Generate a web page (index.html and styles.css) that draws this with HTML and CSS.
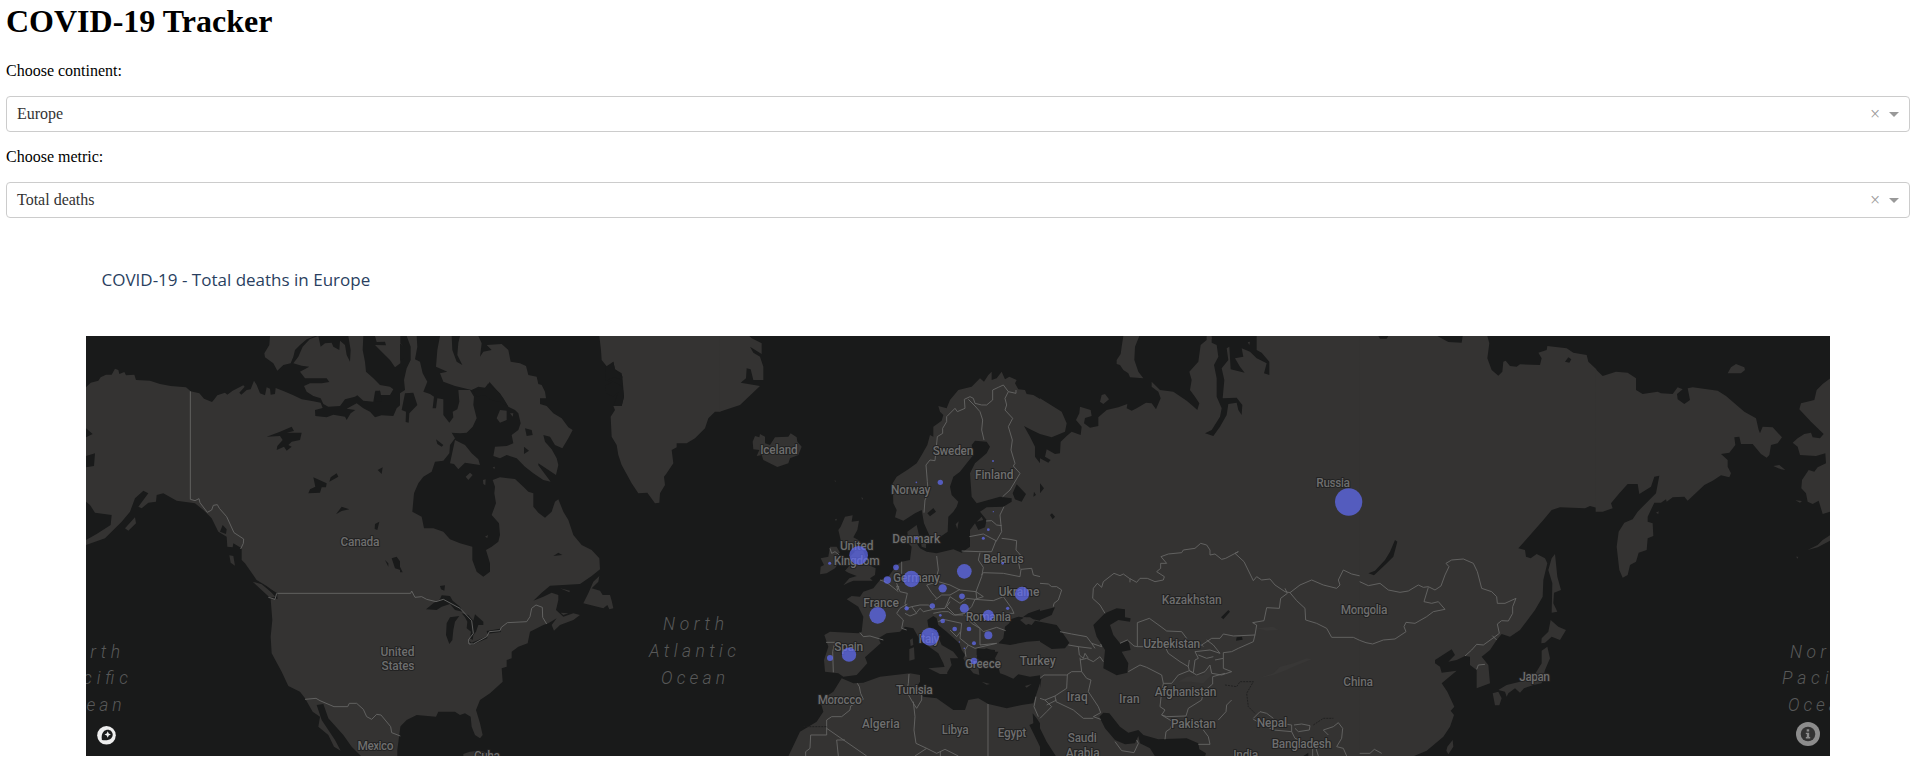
FILE: index.html
```html
<!DOCTYPE html>
<html lang="en">
<head>
<meta charset="utf-8">
<title>COVID-19 Tracker</title>
<link rel="stylesheet" href="styles.css">
</head>
<body>
<h1 class="page-title">COVID-19 Tracker</h1>
<p class="label">Choose continent:</p>
<div class="select"><span class="select-value">Europe</span><span class="select-clear">×</span><span class="select-arrow"></span></div>
<p class="label">Choose metric:</p>
<div class="select"><span class="select-value">Total deaths</span><span class="select-clear">×</span><span class="select-arrow"></span></div>
<section class="graph">
<h2 class="graph-title">COVID-19 - Total deaths in Europe</h2>
<svg class="map" viewBox="86 336 1744 420" width="1744" height="420">
<!-- North America, west -->
<g transform="translate(80 330) scale(.33333)">
<path class="land" d="M18 172L32 158 55 152 62 142 78 134 95 134 105 116 115 120 118 132 133 126 138 136 163 134 168 150 210 152 240 162 272 168 318 172 332 184 358 190 372 206 396 216 403 208 412 196 435 188 442 194 458 182 490 166 494 170 478 188 484 194 500 180 512 178 522 152 530 165 540 190 555 196 560 172 570 176 572 194 585 192 587 174 612 184 640 196 665 208 700 214 722 218 728 234 705 240 706 258 740 262 760 254 795 260 800 270 812 250 826 240 800 236 830 220 850 235 870 245 885 262 905 256 940 258 950 235 961 225V1190L952 1260V1278H843L815 1250 790 1215 745 1165 730 1122 710 1125 725 1170 765 1230 782 1262 762 1250 745 1215 715 1190 720 1160 698 1145 675 1105 660 1085 625 1068 605 1025 575 970 572 920 577 870 572 808 592 806 588 790 560 768 530 750 495 700 485 690 485 655 460 640 458 652 442 650 440 620 415 605 395 565 370 540 345 520 290 512 250 490 230 495 228 515 205 518 185 535 175 530 205 490 190 482 165 505 150 545 125 575 75 625 18 645 18 630 50 612 92 585 95 555 45 548 30 525 18 515V412L42 408 45 370 18 378V322L38 312 18 295Z"/>
<path class="land" d="M570 18H705L680 28 660 45 645 60 640 80 632 100 610 105 592 122 580 100 555 82 553 70 568 45ZM715 18L690 27 668 50 655 80 640 100 665 107 688 110 660 125 675 145 740 145 748 156 725 160 690 160 672 168 680 185 700 198 722 205 730 222 745 230 780 228 795 208 825 200 832 196 850 212 880 215 885 185 900 182 902 195 930 195 940 178 930 170 900 165 880 145 858 125 855 95 848 60 850 18H805L812 60 810 95 800 75 795 45 780 32 778 60 760 50 755 38 735 40 722 50ZM885 18H961V100L945 112 930 90 905 65 885 45 918 46 915 35 890 36ZM518 755L545 763 590 800 570 803ZM135 595L165 562 168 580 145 602ZM448 676L460 678 465 707 452 698Z"/>
<path class="water" d="M560 320L600 305 635 290 642 303 620 308 665 308 660 330 635 335 625 345 635 350 620 362 612 350 590 360 592 348 608 330 600 318ZM685 490L690 478 706 470 700 442 740 460 738 472 725 472 720 488ZM748 455L752 442 770 430 775 440ZM768 553L785 530 808 538 785 543ZM893 420L908 412 905 432ZM935 685L950 680 961 695V720L945 715ZM885 582L898 575 892 600 884 597ZM915 690L925 700 925 710ZM560 770L592 790 592 808ZM428 585L440 598 438 612 420 605ZM886 182L900 182 905 215 885 215Z"/>
<path class="border" d="M331 184V508L345 512 357 506 360 518 382 547 395 540 400 526 412 524 418 535 440 560 462 608 491 627 490 640 482 657M592 790H961M565 802L585 808 590 790M675 1108L708 1105 720 1112 762 1130H803L808 1120H830L850 1138 860 1160 875 1168 890 1153 903 1155 932 1190 935 1208 961 1218"/>
</g>
<!-- North America, east, and Greenland -->
<g transform="translate(400 330) scale(.33333)">
<path class="land" d="M0 90L12 80 10 50 0 38ZM120 18H155L157 60 170 95 187 105 172 75 175 38 180 18H235L245 40 240 80 250 65 275 60 260 45 305 42 325 60 332 95 360 100 378 108 385 135 410 140 415 162 425 165 435 185 438 205 420 205 420 222 440 228 460 250 485 265 505 292 518 300 505 325 487 355 465 345 450 320 430 315 435 335 455 358 470 385 475 405 468 435 415 400 415 406 452 455 430 450 400 430 375 410 350 385 320 375 300 385 280 378 285 350 320 348 340 340 335 315 355 300 362 280 355 250 345 240 325 230 310 205 290 180 268 155 265 175 235 170 215 180 165 168 130 155 120 130 142 125 108 110 112 60ZM0 190L15 180 12 150 20 115 32 90 32 50 20 18H50L52 50 45 88 60 95 68 130 82 155 70 185 90 192 102 200 98 235 108 235 112 205 130 208 130 255 148 278 160 262 158 245 172 238 178 215 175 180 210 180 222 200 220 225 230 265 218 290 200 308 180 310 155 308 165 325 150 345 148 370 130 392 105 395 95 425 70 440 55 460 42 490 37 545 65 560 72 595 100 595 130 605 150 628 180 640 217 650 217 690 230 725 250 740 270 725 270 700 258 660 275 650 295 635 300 615 297 580 275 555 288 520 283 490 285 470 278 450 300 442 345 447 370 470 385 485 400 490 400 530 415 548 435 563 455 545 465 515 475 508 490 545 505 570 520 615 545 645 575 660 598 685 600 718 575 738 540 762 450 767 425 788 400 812 430 800 455 788 475 795 475 810 468 840 490 860 520 850 540 855 520 870 480 885 462 902 455 885 470 865 445 880 430 885 390 905 383 940 355 950 335 965 335 985 320 990 320 1010 305 1015 308 1055 270 1090 240 1110 228 1140 240 1180 248 1215 240 1225 225 1215 215 1190 212 1160 195 1150 180 1155 165 1145 115 1145 108 1160 50 1155 20 1170 0 1190ZM598 738L595 755 575 775 600 782 608 795 630 795 635 812 640 835 628 838 622 825 610 835 550 820 565 790 580 755ZM165 330L150 400 162 402 175 418 195 398 240 405 235 388 215 370 195 345ZM290 265L300 240 320 242 320 270 300 278ZM330 250L340 250 338 260ZM197 440L210 428 218 435 205 450ZM249 450L257 448 256 466 250 462ZM255 620L264 615 262 624ZM480 775L510 782 508 787ZM482 848L505 850 490 855ZM278 412L285 410 283 418Z"/>
<path class="land" d="M598 18H961V245L945 245 925 265 915 295 885 325 860 340 830 340 830 352 815 360 820 400 800 430 792 440 795 465 780 490 778 518 765 520 742 488 715 490 695 460 665 405 655 375 650 345 635 320 632 260 645 240 640 228 665 228 672 200 668 150 665 130 645 118 640 95 625 115 605 90 603 60ZM190 1272Q225 1255 270 1270L300 1279H190Z"/>
<path class="water" d="M615 112L640 95 645 118 668 140 665 150 645 142 625 148 650 160 668 170 672 200 665 228 640 228 655 185 640 200 618 190 618 165 635 158 617 150ZM78 838L100 820 120 808 125 796 150 798 158 812 180 830 188 845 165 840 150 822 125 830 110 840ZM140 880L150 862 178 858 165 875 160 900 157 930 148 942 138 915ZM185 850L205 855 220 872 225 853 250 875 250 885 235 885 228 905 220 915 218 930 210 925 213 905 200 895 202 875 195 862ZM203 930L215 938 262 918 262 925 215 946ZM260 903L300 896 303 906 262 911ZM120 768L135 766 133 782 123 778ZM375 295L395 300 398 315 380 318ZM372 350L387 362 372 372ZM460 678L475 668 487 675ZM108 328L130 345 125 350 112 342ZM0 40L12 50V85L0 92ZM15 190L40 188 52 225 28 250 26 278 17 276 18 245 5 240ZM218 178L250 180 265 160 300 190 325 230 300 215 280 212 265 205 255 195 230 200ZM0 710L8 727H0Z"/>
<path class="border" d="M0 790H32L35 783 45 802 65 800 80 808 108 815 130 808 180 835 215 872 220 910 205 930 207 942 220 942 260 920 268 905 300 902 304 892 322 878 380 875 390 860 395 835 408 825 427 832 428 862 440 882"/>
</g>
<!-- Europe and North Africa -->
<g transform="translate(720 330) scale(.33333)">
<path class="land" d="M-1 18H88L95 25 125 40 125 72 90 50 100 68 120 80 130 110 130 150 100 150 92 118 80 115 78 145 62 158 120 168 60 225 -1 245ZM98 335L105 318 118 322 120 312 135 320 135 340 150 345 165 322 205 320 212 310 230 322 232 335 245 350 235 375 210 385 205 400 172 411 130 390 125 375 110 378 118 360 100 358ZM362 590L375 560 398 556 395 575 417 572 412 600 400 622 415 630 425 650 440 690 445 705 467 715 465 735 450 745 458 752 400 752 385 758 370 766 388 745 410 738 385 728 375 722 395 700 390 680 405 665 385 650 362 630 355 600ZM330 650L350 650 360 668 352 672 355 700 345 715 320 730 300 733 302 710 312 705 302 685 325 680Z"/>
<path class="land" d="M525 562L530 540 520 520 518 460 530 440 565 418 590 400 605 375 622 345 630 315 640 320 640 290 665 272 670 255 660 245 655 228 680 235 690 210 715 180 755 170 780 145 792 155 805 135 815 125 815 150 830 145 845 125 855 148 868 140 890 150 885 160 895 178 915 180 920 192 940 195 960 207V875L945 872 935 885 918 880 908 862 895 860 872 868 868 880 855 890 850 925 835 940 870 945 920 935 960 932V1036L930 1040 895 1033 880 1046 855 1035 840 1030 835 1010 825 985 835 965 825 965 800 955 775 962 770 985 790 998 775 1010 778 1035 760 1030 740 1005 730 985 735 975 725 960 718 940 680 905 655 885 650 865 640 858 622 870 625 890 650 910 665 945 700 965 715 985 690 985 695 1005 680 1030 670 1000 655 970 620 945 600 930 580 895 555 890 540 905 500 910 475 925 482 940 435 982 442 1000 410 1035 370 1040 355 1030 315 1025 312 990 325 950 313 915 330 905 415 910 425 905 430 860 415 830 380 808 395 798 420 800 430 785 460 775 480 750 505 740 530 705 545 695 570 690 575 650 565 640 562 605 590 585 598 620 590 640 600 655 620 665 650 670 700 658 725 668 750 650 750 600 765 580 775 600 795 592 800 570 780 545 800 532 850 530 875 515 875 505 840 500 770 520 755 500 750 430 765 400 800 370 810 350 800 335 765 332 755 345 760 375 740 400 720 425 700 440 690 470 695 495 715 515 710 530 700 545 685 560 683 605 655 625 630 620 612 580 605 540 585 550 550 572Z"/>
<path class="land" d="M205 1279L240 1205 290 1175 310 1145 303 1120 310 1105 340 1085 365 1045 400 1060 430 1058 480 1040 570 1030 600 1035 600 1055 590 1070 610 1100 650 1105 700 1140 735 1140 745 1110 775 1105 805 1122 860 1135 905 1125 940 1120 950 1090 960 1060V1180L950 1165 938 1150 940 1180 928 1185 955 1240 960 1250V1279ZM625 1015L680 1010 682 1032 660 1032ZM568 957L582 952 584 988 568 992ZM570 930L578 925 580 945 572 948ZM785 1055L810 1062 800 1064ZM915 1068L935 1062 920 1073ZM602 630L618 628 618 655 605 650ZM707 583L716 574 712 597ZM424 502L429 504 427 510ZM342 452H348V455ZM345 568L351 566 348 574ZM770 575L785 560 790 570Z"/>
<path class="water" d="M912 288L935 300 960 312V400L945 380 945 350 930 320ZM622 550L640 534 648 545 630 559ZM878 490L890 463 918 492 905 515 885 508ZM908 862L925 850 960 838V872L940 868 930 862ZM942 485L948 495 940 500ZM770 955L825 960 825 985 790 990 770 975Z"/>
<path class="land" d="M900 870L915 862 940 875 918 885Z"/>
<path class="border" d="M612 548L615 510 625 490 622 455 618 405 630 390 645 392 652 320 668 310 668 295 680 275 680 260 705 235 712 245 735 235 733 208 750 200 760 205 765 220 785 225 800 225 818 210 818 180 835 172 850 165 865 185 888 190 888 180M745 208L765 228 780 245 788 270 785 300 792 330M865 185L855 205 860 225 855 240 878 265 865 290 877 330 873 360 885 400 880 408 900 430 870 480 848 500M852 530L840 555 845 605 828 635M798 573L815 572 830 585 845 587M748 620L790 612 828 632 815 665 780 665 725 663M845 625L870 628 890 632 888 660 910 685 895 695 900 718M785 735L790 728 850 730 900 740 903 718 935 715 940 735 961 740M780 668L775 690 790 712 785 740 768 785M650 678L655 720 650 740 655 755M655 755L620 765 635 788 650 805M655 755L690 765 720 780 768 785 770 805M645 810L665 795 690 795 720 778M560 835L575 830 600 825 625 825 640 838 675 835 690 800M690 800L720 820 740 805 765 808 755 830 735 850 705 855 680 830 690 815M765 808L820 812 850 800 875 835 882 850 860 850M755 870L790 905 830 892 857 902M735 855L755 880 780 895 780 945 830 940M640 850L665 845 685 845 700 855 730 855M655 875L670 868 725 880 720 925 745 945 735 960 738 980M690 900L710 920 722 905M745 945L765 955 830 940M545 695L545 730 525 745 530 760 540 785 562 790 555 820 560 835M480 750L495 755 510 765 535 785M562 822L540 835 530 850 550 870 545 895 560 900M555 850L570 858 590 850 575 830M590 848L600 835 610 845 640 838M420 908L430 920 450 918 490 930M318 937L345 937 338 965 340 1027M330 655L335 670 345 665 358 675M768 785L790 800 765 808M530 768L537 770 533 780ZM412 1060L418 1070 422 1090 430 1108 392 1128 390 1140 365 1160 335 1160 320 1170V1215H272L270 1255 257 1265V1278M320 1195L440 1278M375 1230H350L355 1278M567 1032L565 1060 560 1085 580 1120 590 1135 605 1110 605 1090M580 1115L585 1160 582 1200 588 1240 620 1255 585 1278M620 1255L650 1270 675 1258 715 1278M661 1265V1278M804 1122V1278M948 1100L942 1130 955 1160"/>
<path class="border dashed" d="M250 1190H320"/>
</g>
<!-- Russia, Middle East and Central Asia -->
<g transform="translate(1040 330) scale(.33333)">
<path class="land" d="M0 18H961V1279H0Z"/>
<path class="water" d="M0 18H250L245 50 242 72 230 90 230 102 240 105 250 120 265 130 270 142 310 145 295 125 283 90 285 50 298 18H500L500 30 482 45 475 95 448 125 455 150 450 180 465 200 478 220 472 240 455 225 440 212 400 185 360 180 335 155 335 170 355 185 362 205 348 238 335 220 318 218 290 235 275 242 260 235 262 222 235 232 200 240 175 262 175 288 150 293 132 280 135 264 155 258 152 240 120 230 118 250 108 270 125 290 122 315 95 305 80 318 62 335 60 370 45 372 20 358 15 380 32 390 25 398 0 385V312L35 322 75 305 80 280 65 245 0 205ZM515 18H650V60L665 68 688 95V135L672 130 680 100 650 85 630 65 605 55 610 80 585 85 600 110 614 128 572 118 568 50 560 55 565 90 545 115 553 150 548 205 590 203 607 225 605 255 595 240 590 218 565 222 560 255 540 290 520 318 495 310 515 300 540 260 545 235 530 200 530 145 522 105 535 80 530 45 515 38ZM160 885L195 850 230 835 255 838 255 862 272 865 270 875 235 870 210 885 220 915 240 940 265 930 272 960 245 965 265 1000 262 1028 230 1036 190 1015 195 960 170 920ZM178 1160L190 1148 208 1150 240 1190 265 1208 295 1200 310 1215 355 1228 440 1225 475 1240 478 1258 498 1270 495 1279H345L330 1255 300 1240 295 1218 285 1240 255 1243 225 1230 195 1195ZM0 1195L20 1235 48 1279H0ZM0 875L50 885 70 912 88 938 75 955 35 957 0 935ZM0 843L45 832 35 855 0 870ZM543 862L565 840 570 845 550 868ZM588 932L590 922 606 920 608 929ZM0 460L12 475 0 490ZM30 555L36 550 45 560 38 568ZM790 1278L805 1268V1279ZM0 1040L4 1045 0 1075Z"/>
<path class="land" d="M180 215L185 195 195 192 207 208 190 222ZM498 22H515V28ZM623 37L630 35 628 45Z"/>
<path class="relief" d="M655 1045L700 1030 720 1010 760 1000 800 985 815 988 760 1010 740 1020 700 1035ZM650 895L700 890 715 900 680 902ZM415 1055L440 1040 490 1035 510 1010 520 1030 490 1060 450 1055Z"/>
<path class="border" d="M0 760L25 762 35 770 50 770 65 780 55 810 42 820 40 830M195 850L180 825 158 805 160 775 172 760 185 772 190 755 222 730 240 737 250 732 268 745 290 757 300 745 322 745 345 755 370 750 373 740 350 725 362 715 362 700 380 700 363 680 385 672 425 668 430 660 465 655 482 640 500 645 510 660 510 675 525 672 545 688 557 685 595 665 585 670 612 695 640 752 650 740 665 750 690 747 705 765 735 785 750 788M270 745V757M735 775L742 790 722 805 718 835 680 833 672 872 638 878 650 885 645 915 580 918 550 912 540 925 515 925 485 945 490 950M750 788L780 765 815 750 850 765 890 775 900 765 895 750 910 720 935 732 961 738M750 788L770 812 795 835 797 870 830 880 860 895 875 922 940 922 961 932M645 915L640 935 595 955 575 965 550 968 550 985 525 990M240 940L262 930 282 948 292 950V878L328 865 360 888 380 903 425 905 440 925 440 945 485 945M292 950H310M375 950L385 970 420 995 445 1010 448 1022 460 1028 465 990 475 985 465 965 510 960 540 970 520 945 500 930M475 975L500 985 520 980M448 990L445 1010M265 1025L300 1005 320 1012 365 1035 370 1060 395 1060 415 1035 448 1022 470 1035 495 1025 510 1005 515 1030 545 1035 575 1025 550 1015 550 985M370 1060L365 1085 360 1130 375 1140 365 1155 398 1175 392 1195 378 1205 375 1228M365 1155L380 1160 438 1158 445 1135 485 1110 490 1085 518 1062 518 1040 555 1030M575 1110L560 1125 558 1145 535 1170M490 1200L505 1220 510 1243 475 1243M60 905L95 912 140 920 155 940 185 950 182 942M85 945L115 950 155 955M155 940L165 955M115 950L118 975 130 985 135 970 145 985M120 983L125 1025 140 1045 153 1050 145 1085 175 1130 182 1148 160 1160 182 1168M120 990L140 985 160 995 180 980 190 995M125 1025L95 1025 80 1035 45 1035 12 1035 0 1045M82 1035L80 1075 45 1098 48 1115 100 1140 130 1165 160 1165M45 1098L15 1110 0 1105M15 1110L35 1130 20 1145 0 1165M50 1110L20 1125M225 1235L245 1262 282 1268 295 1240 290 1230M640 1165L660 1145 680 1150 700 1165M735 1182L755 1185 755 1205 700 1200 640 1168M762 1185L785 1182 810 1187 808 1200 775 1205 765 1195M755 1205L765 1225 790 1235M865 1215L850 1200 880 1190 895 1178 908 1195 905 1225 890 1250 910 1255 920 1278M818 1255V1278M828 1255L835 1278"/>
<path class="border dashed" d="M555 1065L590 1070 600 1055 640 1055 620 1090 625 1130 645 1150M820 1185L850 1165 880 1165"/>
</g>
<!-- East Asia -->
<g transform="translate(1360 330) scale(.33333)">
<path class="land" d="M-1 18H382L388 40 382 85 395 120 415 137 427 125 430 95 437 92 450 108 470 110 480 103 540 105 545 85 535 68 560 60 562 48 620 55 640 68 680 75 685 95 709 118V545L715 535 690 528 675 535 600 532 575 540 550 570 515 610 475 655 495 660 498 680 512 685 530 672 555 685 562 700 550 750 548 800 525 840 480 900 450 920 425 912 410 930 390 960 365 980 385 1005 390 1060 350 1075 350 1020 330 1005 330 980 315 978 290 990 265 995 285 975 275 958 225 990 225 1000 240 1010 245 1028 290 1022 245 1060 262 1085 283 1130 272 1142 282 1155 270 1190 250 1220 200 1262 160 1279H-1ZM575 685L585 672 592 740 603 780 582 788 580 820 592 845 575 848 577 760 565 720ZM572 870L595 890 618 900 600 930 575 920 555 938 544 940 545 925 565 905ZM545 962L562 950 570 985 555 1020 545 1060 520 1065 492 1075 480 1088 465 1075 445 1090 440 1100 435 1085 415 1080 440 1065 480 1055 520 1040 545 1000ZM398 1090L415 1085 425 1105 418 1126 405 1126ZM262 1250L278 1230 280 1250 265 1273 259 1262Z"/>
<path class="water" d="M25 730L45 722 75 690 90 665 105 630 112 635 100 680 75 705 42 736ZM232 18H308L305 38 265 36ZM55 18H85L80 26 60 26ZM615 95L625 82 634 88 628 98Z"/>
<path class="border" d="M-1 755L25 767 60 760 85 780 120 787 145 783 175 765 190 772 205 770 225 780 243 768 255 735 267 710 258 700 275 690 310 687 340 700 352 725 365 775 395 785 410 800 412 820 435 820 468 805 458 830 458 850 445 873 425 872 412 882 418 910 405 920 370 945 350 943 335 960 315 978M205 772L192 815 215 820 235 815 255 838 220 845 200 860 165 880 138 877 132 890 138 905 105 927 70 930 38 942 18 938 -1 931M350 1018L355 1005 375 1003M397 917L410 930M-1 1270L30 1270 43 1258 65 1270"/>
</g>
<!-- Bering Strait -->
<g transform="translate(1596 330) scale(.33333)">
<path class="land" d="M-1 118L20 138 60 125 95 128 120 145 120 180 140 192 185 185 195 190 230 192 245 172 260 178 243 192 245 208 265 222 282 210 275 175 290 172 365 182 390 198 445 245 480 265 488 300 492 310 500 290 530 292 558 322 545 340 525 345 520 375 512 383 495 372 470 342 435 342 430 320 415 322 418 345 400 368 375 372 395 390 395 410 405 430 400 442 375 436 350 452 325 465 275 512 265 500 230 502 212 515 210 508 195 518 175 518 155 560 155 575 170 580 172 618 155 625 152 660 128 668 120 695 102 705 95 735 80 743 70 720 62 650 68 605 85 578 110 568 125 545 180 490 190 437 175 440 165 470 130 492 125 462 95 462 70 490 45 520 50 535 20 545 -1 545ZM703 145L680 162 662 180 655 210 615 220 610 238 645 275 683 312 672 325 650 322 645 308 625 312 605 325 590 338 605 350 612 375 660 378 688 370 690 400 665 412 655 425 638 420 618 450 616 475 630 490 635 515 650 522 668 512 680 552 703 545ZM703 615L680 630 665 645 635 660 665 652 703 632ZM395 130L405 112 420 102 445 112 447 120 435 130ZM532 408L550 405 568 420 555 418ZM598 511L618 513 612 518ZM600 680L607 680 605 686ZM580 694L588 690ZM61 763L68 753ZM180 548L188 544 187 552Z"/>
</g>
<g class="ocean-labels">
<text x="663" y="630" textLength="61">North</text><text x="649" y="657" textLength="87">Atlantic</text><text x="661" y="684" textLength="64">Ocean</text>
<text x="60" y="657.7" textLength="60">North</text><text x="54" y="684.4" textLength="74">Pacific</text><text x="58.5" y="711" textLength="63">Ocean</text>
<text x="1790" y="657.7" textLength="60">North</text><text x="1782" y="684.4" textLength="74">Pacific</text><text x="1788" y="711" textLength="63">Ocean</text>
</g>
<g class="country-labels">
<text x="360" y="546.3" textLength="39">Canada</text><text x="397.5" y="655.8" textLength="34">United</text><text x="398" y="670.3" textLength="33">States</text><text x="375.5" y="750.3" textLength="36">Mexico</text><text x="487" y="760" textLength="26">Cuba</text>
<text x="779" y="454.3" textLength="37.7">Iceland</text><text x="953" y="455" textLength="40.7">Sweden</text><text x="994.2" y="478.7" textLength="38.5">Finland</text><text x="910.7" y="494.3" textLength="39.3">Norway</text><text x="916.3" y="543" textLength="48">Denmark</text>
<text x="856.7" y="550" textLength="33.5">United</text><text x="856.7" y="565" textLength="46">Kingdom</text><text x="916.5" y="582.3" textLength="47">Germany</text><text x="1003.5" y="563" textLength="40.5">Belarus</text><text x="1019" y="596" textLength="40.7">Ukraine</text>
<text x="881.2" y="606.7" textLength="35.7">France</text><text x="988.3" y="620.7" textLength="45.3">Romania</text><text x="929" y="643" textLength="21">Italy</text><text x="848.8" y="650.7" textLength="29">Spain</text><text x="983" y="667.7" textLength="36">Greece</text><text x="1037.7" y="665" textLength="36">Turkey</text>
<text x="914.3" y="694.3" textLength="36.7">Tunisia</text><text x="839.7" y="704.3" textLength="44">Morocco</text><text x="880.8" y="728" textLength="37.7">Algeria</text><text x="955.2" y="733.7" textLength="27">Libya</text><text x="1012" y="737" textLength="28.7">Egypt</text>
<text x="1333.2" y="486.7" textLength="33.7">Russia</text><text x="1191.7" y="604" textLength="60">Kazakhstan</text><text x="1171.8" y="648" textLength="57">Uzbekistan</text><text x="1077.2" y="700.7" textLength="21">Iraq</text><text x="1129.3" y="703.3" textLength="20.7">Iran</text>
<text x="1185.5" y="696.3" textLength="61.7">Afghanistan</text><text x="1193.5" y="727.7" textLength="45">Pakistan</text><text x="1271.8" y="727.3" textLength="30.3">Nepal</text><text x="1301.5" y="748.3" textLength="59.7">Bangladesh</text><text x="1082.2" y="742" textLength="29">Saudi</text><text x="1082.7" y="756.7" textLength="34">Arabia</text><text x="1245.8" y="759" textLength="25">India</text>
<text x="1364" y="613.7" textLength="46.7">Mongolia</text><text x="1358.2" y="686.3" textLength="29.7">China</text><text x="1534.7" y="681.3" textLength="30.7">Japan</text>
</g>
<g class="markers" transform="translate(720 330) scale(.33333)">
<circle cx="819" cy="393" r="3"/><circle cx="589" cy="457" r="2.5"/><circle cx="661" cy="457" r="8"/><circle cx="820" cy="545" r="2"/><circle cx="805" cy="599" r="4"/><circle cx="790" cy="625" r="4.5"/><circle cx="589" cy="625" r="4"/><circle cx="848" cy="700" r="4"/><circle cx="416" cy="676" r="28"/><circle cx="329" cy="700" r="4.5"/><circle cx="528" cy="712" r="8.5"/><circle cx="502" cy="750" r="11"/><circle cx="574" cy="747" r="24.5"/><circle cx="733" cy="724" r="22"/><circle cx="668" cy="775" r="12.5"/><circle cx="726" cy="799" r="8.5"/><circle cx="906" cy="792" r="21.5"/><circle cx="733" cy="835" r="13.5"/><circle cx="637" cy="828" r="8"/><circle cx="560" cy="835" r="6.5"/><circle cx="473" cy="856" r="25"/><circle cx="805" cy="856" r="16.5"/><circle cx="863" cy="835" r="5"/><circle cx="661" cy="856" r="4"/><circle cx="668" cy="873" r="7"/><circle cx="704" cy="897" r="7"/><circle cx="747" cy="897" r="7"/><circle cx="805" cy="916" r="12"/><circle cx="762" cy="940" r="6"/><circle cx="718" cy="936" r="2"/><circle cx="733" cy="955" r="2.5"/><circle cx="630" cy="920" r="27"/><circle cx="387" cy="974" r="21.5"/><circle cx="330" cy="984" r="9"/><circle cx="762" cy="993" r="10"/><circle cx="1886" cy="516" r="41"/>
</g>
<g transform="translate(106.5 735.3)">
<circle r="9.3" fill="#eee"/>
<path fill="#191a1a" d="M-4.6 4.8C-5.2 1-4.7-2-2.6-4C-.4-6 3-6 4.8-4C6.8-2 6.7 1 4.8 3C2.8 5-.6 5.4-4.6 4.8Z"/>
<path fill="#eee" d="M1.2-4L2.2-1.8 4.4-.8 2.2.2 1.2 2.4.2.2-2-.8.2-1.8Z"/>
</g>
<g transform="translate(1808 734)">
<circle r="12" fill="#8c8c8c"/><circle r="7.3" fill="#333"/>
<path fill="#8c8c8c" d="M-1.3-4.8H1.2V-2.4H-1.3ZM-2.2-1.2H1.2V3H2.2V4.4H-2.2V3H-1.2V0H-2.2Z"/>
</g>
</svg>
</section>
</body>
</html>
```
FILE: styles.css
```css
body {
  margin: 0 6px;
  background: #fff;
  color: #000;
  font: 16px/18px "Liberation Serif", "Times New Roman", serif;
  overflow: hidden;
}

.page-title {
  margin: 0;
  padding-top: 3px;
  height: 59px;
  box-sizing: border-box;
  font-size: 32px;
  line-height: 37px;
}

.label {
  margin: 0 0 16px;
}

.select {
  display: flex;
  align-items: center;
  height: 36px;
  box-sizing: border-box;
  margin-bottom: 16px;
  padding: 0 10px;
  border: 1px solid #ccc;
  border-radius: 4px;
  color: #333;
}

.page-title + .label {
  margin-top: 3px;
}

.select-value {
  flex: 1;
}

.select-clear {
  width: 16px;
  margin-right: 3px;
  color: #999;
  font-size: 18px;
  line-height: 18px;
  text-align: left;
}

.select-arrow {
  border: solid transparent;
  border-width: 5px 5px 0;
  border-top-color: #999;
}

.graph {
  margin: -16px 80px 0;
}

.graph-title {
  box-sizing: border-box;
  height: 118px;
  margin: 0;
  padding: 50px 0 0 15.5px;
  color: #2a3f5f;
  font: 400 17px/24px "Open Sans", sans-serif;
}

.map {
  display: block;
  background: #191a1a;
}

.land {
  fill: #343332;
}

.water {
  fill: #191a1a;
}

.relief {
  fill: #383736;
}

.border {
  fill: none;
  stroke: #666665;
  stroke-width: 2.7;
  stroke-linejoin: round;
}

.dashed {
  stroke: #1f1f1f;
  stroke-dasharray: 6 3;
}

.country-labels {
  font: 500 12px Roboto, sans-serif;
  fill: #6e6e6e;
  stroke: #222;
  stroke-width: 2px;
  stroke-linejoin: round;
  paint-order: stroke;
  text-anchor: middle;
}

.ocean-labels {
  font: italic 300 17.5px Roboto, sans-serif;
  fill: #585959;
}

.markers {
  fill: #636efa;
  fill-opacity: .7;
}
```
